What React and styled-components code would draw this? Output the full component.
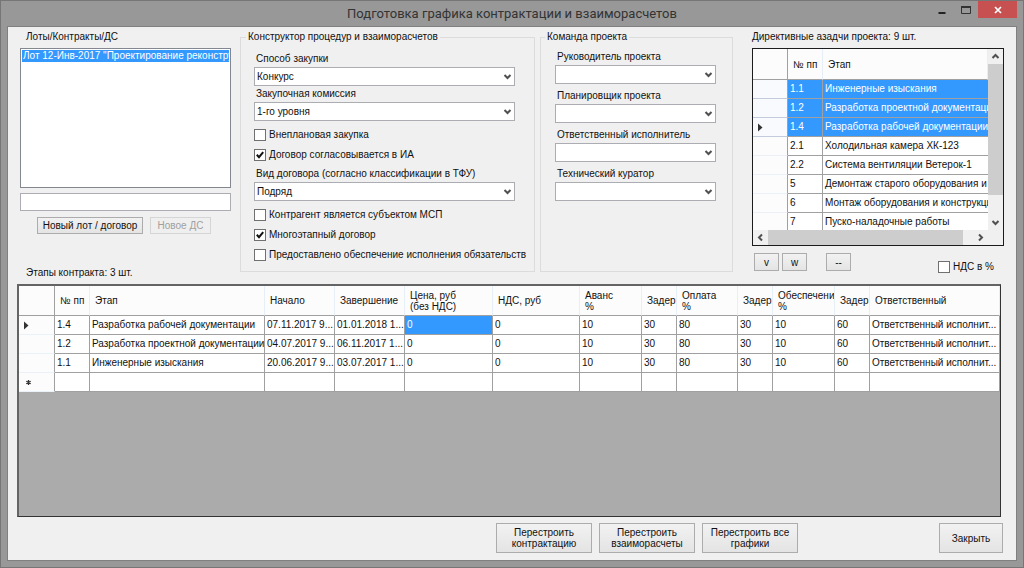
import React from 'react';
import styled, { createGlobalStyle } from 'styled-components';

const GlobalStyle = createGlobalStyle`
    *, *::before, *::after {
        box-sizing: border-box;
    }
    body {
        margin: 0;
        background: #989898;
    }
    body, button, input, select, table {
        font-family: 'Liberation Sans', Arial, sans-serif;
        font-size: 10px;
        line-height: 14px;
        color: #111;
    }
`;

const Window = styled.div`
    display: flex;
    flex-direction: column;
    min-height: 100vh;
    padding: 0 6px 6px;
    background: #989898;
    border: 1px solid #767676;
`;

const TitleBar = styled.header`
    display: grid;
    grid-template-columns: 1fr auto 1fr;
    height: 25px;
`;

const Title = styled.h1`
    grid-column: 2;
    margin: 0;
    font-family: Roboto, sans-serif;
    font-size: 13px;
    font-weight: 400;
    line-height: 26px;
    color: #333;
    white-space: nowrap;
`;

const WindowControls = styled.div`
    display: flex;
    justify-content: flex-end;
    align-items: flex-start;
`;

const WindowButton = styled.button`
    display: flex;
    align-items: center;
    justify-content: center;
    width: ${(props) => (props.$close ? '39px' : '24px')};
    height: 17px;
    padding: 0;
    border: 0;
    background: ${(props) => (props.$close ? '#c75050' : 'transparent')};
`;

const Form = styled.main`
    display: flex;
    flex: 1;
    flex-direction: column;
    padding: 3px 15px 7px 9px;
    background: #f0f0f0;
    border: 1px solid #808080;
`;

const TopArea = styled.div`
    display: grid;
    grid-template-columns: minmax(0, 223fr) minmax(0, 300fr) minmax(0, 193fr) minmax(0, 268fr);
    align-items: start;
    min-height: 250px;
`;

const LotsPanel = styled.section`
    display: flex;
    flex-direction: column;
    align-self: stretch;
    margin: 0 9px 0 3px;
`;

const Caption = styled.div`
    padding-left: ${(props) => props.$indent || '0'};
    line-height: 14px;
    white-space: nowrap;
`;

const BottomCaption = styled(Caption)`
    margin-top: auto;
`;

const LotList = styled.ul`
    height: 140px;
    margin: 4px 0 5px;
    padding: 1px;
    list-style: none;
    background: #fff;
    border: 1px solid #828790;
`;

const LotItem = styled.li`
    height: 12px;
    padding-left: 1px;
    overflow: hidden;
    line-height: 12px;
    white-space: nowrap;
    color: #fff;
    background: #3399ff;
`;

const TextBox = styled.input`
    width: 100%;
    height: 18px;
    padding: 0 3px;
    background: #fff;
    border: 1px solid #abadb3;
`;

const ButtonRow = styled.div`
    display: flex;
    gap: 7px;
    margin-top: 6px;
    padding-left: 17px;
`;

const Button = styled.button`
    height: ${(props) => props.$height || '17px'};
    width: ${(props) => props.$width};
    padding: 0;
    line-height: 11px;
    white-space: pre-line;
    background: linear-gradient(#f2f2f2, #e4e4e4);
    border: 1px solid #acacac;

    &:disabled {
        color: #a0a0a0;
        background: #efefef;
        border-color: #d5d5d5;
    }
`;

const Group = styled.fieldset`
    min-width: 0;
    height: 242px;
    margin: 0;
    padding: ${(props) => props.$pad};
    border: 1px solid #dcdcdc;
`;

const ProcedureGroup = styled(Group)`
    margin-right: 5px;
`;

const Legend = styled.legend`
    margin-left: ${(props) => props.$shift};
    padding: 0 2px;
    line-height: 14px;
`;

const FieldLabel = styled.label`
    display: block;
    height: 16px;
    padding-left: 2px;
    line-height: 16px;
    white-space: nowrap;
`;

const SelectWrap = styled.div`
    display: grid;
    align-items: center;

    & > * {
        grid-area: 1 / 1;
    }

    & > svg {
        justify-self: end;
        margin-right: 3px;
        pointer-events: none;
    }
`;

const Select = styled.select`
    appearance: none;
    width: 100%;
    height: 19px;
    padding: 0 16px 0 2px;
    background: #fff;
    border: 1px solid #abadb3;
    border-radius: 0;
`;

const FieldStack = styled.div`
    display: flex;
    flex-direction: column;
    gap: 4px;
`;

const CheckList = styled.div`
    margin: 4px 0 1px;
`;

const CheckLabel = styled.label`
    display: flex;
    align-items: center;
    gap: 3px;
    height: 20px;
    white-space: nowrap;
`;

const CheckMark = styled.span`
    display: grid;
    width: 12px;
    height: 12px;

    & > * {
        grid-area: 1 / 1;
    }

    & > svg {
        pointer-events: none;
    }
`;

const CheckInput = styled.input`
    appearance: none;
    width: 12px;
    height: 12px;
    margin: 0;
    background: #fff;
    border: 1px solid #707070;
`;

const TasksPanel = styled.section`
    margin-left: 19px;
    margin-right: -3px;
`;

const TaskGrid = styled.div`
    display: grid;
    grid-template-columns: minmax(0, 1fr) 15px;
    grid-template-rows: 181px 15px;
    height: 198px;
    margin-top: 4px;
    background: #f0f0f0;
    border: 1px solid #1c1c1c;
`;

const TaskView = styled.div`
    overflow: hidden;
    background: #fff;
`;

const Scrollbar = styled.div`
    display: flex;
    flex-direction: ${(props) => (props.$vertical ? 'column' : 'row')};
`;

const ScrollButton = styled.button`
    display: flex;
    flex: none;
    align-items: center;
    justify-content: center;
    width: 15px;
    height: 15px;
    padding: 0;
    background: transparent;
    border: 0;
`;

const ScrollTrack = styled.div`
    display: flex;
    flex: 1;
    flex-direction: inherit;
`;

const ScrollThumb = styled.div`
    flex: 0 0 ${(props) => props.$size};
    background: #cdcdcd;
`;

const Table = styled.table`
    width: 100%;
    table-layout: fixed;
    border-collapse: separate;
    border-spacing: 0;
    background: #fff;
`;

const HeadCell = styled.th`
    height: ${(props) => props.$height || '30px'};
    padding: 0 0 0 5px;
    overflow: hidden;
    font-weight: 400;
    line-height: 11px;
    text-align: left;
    vertical-align: middle;
    white-space: pre;
    background: #fcfcfc;
    border-right: 1px solid #e6eef7;
    border-bottom: 1px solid #a0a0a0;

    &:first-child {
        border-right-color: #a0a0a0;
    }
`;

const RowHead = styled.th`
    height: 19px;
    padding: 0 0 0 5px;
    line-height: 12px;
    text-align: left;
    background: ${(props) => (props.$selected ? '#f8fafd' : '#fcfcfc')};
    border-right: 1px solid #a0a0a0;
    border-bottom: 1px solid ${(props) => (props.$selected ? '#c3cbdc' : '#eaf1f8')};

    & > svg {
        display: block;
    }
`;

const Cell = styled.td`
    height: 19px;
    padding: 0 0 0 2px;
    overflow: hidden;
    line-height: 18px;
    white-space: nowrap;
    color: ${(props) => (props.$selected ? '#fff' : '#111')};
    background: ${(props) => (props.$selected ? '#3399ff' : '#fff')};
    border-right: 1px solid #a0a0a0;
    border-bottom: 1px solid #a0a0a0;

    ${TaskView} &:last-child {
        border-right: 0;
    }
`;

const TaskTools = styled.div`
    display: flex;
    align-items: flex-start;
    justify-content: space-between;
    height: 24px;
    margin-top: 7px;
    padding: 0 10px 0 2px;

    & > label {
        align-self: flex-end;
    }
`;

const ToolButtons = styled.div`
    display: flex;
    gap: 3px;

    & > :last-child {
        margin-left: 16px;
    }
`;

const StageGrid = styled.section`
    flex: 1;
    margin-top: 4px;
    background: #ababab;
    border: solid #646464;
    border-width: 2px 1px 1px 2px;
    border-right-color: #333;
    border-bottom-color: #333;
    overflow: hidden;
`;

const Footer = styled.footer`
    display: flex;
    justify-content: flex-end;
    gap: 7px;
    margin: 6px -2px 0 0;

    & > :last-child {
        margin-left: 134px;
    }
`;

const CHEVRONS = {
    down: 'M1.5 3 L4.5 6 L7.5 3',
    up: 'M1.5 6 L4.5 3 L7.5 6',
    left: 'M6 1.5 L3 4.5 L6 7.5',
    right: 'M3 1.5 L6 4.5 L3 7.5',
};

const Chevron = ({ dir }) => (
    <svg width="9" height="9" viewBox="0 0 9 9" fill="none" stroke="#505050" strokeWidth="2">
        <path d={CHEVRONS[dir]} />
    </svg>
);

const RowArrow = () => (
    <svg width="5" height="9" viewBox="0 0 5 9">
        <path d="M0 0.5 L4.5 4.5 L0 8.5 Z" fill="#333" />
    </svg>
);

const NewRowMark = () => (
    <svg width="9" height="7" viewBox="0 0 9 7" stroke="#333" strokeWidth="1.3">
        <path d="M4.5 1 V6 M2.3 2.3 L6.7 4.7 M6.7 2.3 L2.3 4.7" />
    </svg>
);

const SelectField = ({ id, label, value }) => (
    <div>
        <FieldLabel htmlFor={id}>{label}</FieldLabel>
        <SelectWrap>
            <Select id={id} defaultValue={value}>
                <option value={value}>{value}</option>
            </Select>
            <Chevron dir="down" />
        </SelectWrap>
    </div>
);

const CheckField = ({ label, initial = false }) => {
    const [checked, setChecked] = React.useState(initial);
    return (
        <CheckLabel>
            <CheckMark>
                <CheckInput type="checkbox" checked={checked} onChange={() => setChecked(!checked)} />
                {checked && (
                    <svg width="12" height="12" viewBox="0 0 12 12" fill="none" stroke="#111" strokeWidth="2">
                        <path d="M2.8 5.8 L5 8.2 L9.2 3.2" />
                    </svg>
                )}
            </CheckMark>
            {label}
        </CheckLabel>
    );
};

const tasks = [
    { num: '1.1', name: 'Инженерные изыскания', selected: true },
    { num: '1.2', name: 'Разработка проектной документаци', selected: true },
    { num: '1.4', name: 'Разработка рабочей документации', selected: true, current: true },
    { num: '2.1', name: 'Холодильная камера ХК-123' },
    { num: '2.2', name: 'Система вентиляции Ветерок-1' },
    { num: '5', name: 'Демонтаж старого оборудования и .' },
    { num: '6', name: 'Монтаж оборудования и конструкци' },
    { num: '7', name: 'Пуско-наладочные работы' },
];

const columns = [
    { title: '№ пп', width: 35 },
    { title: 'Этап', width: 175 },
    { title: 'Начало', width: 70 },
    { title: 'Завершение', width: 70 },
    { title: 'Цена, руб\n(без НДС)', width: 88 },
    { title: 'НДС, руб', width: 87 },
    { title: 'Аванс\n%', width: 62 },
    { title: 'Задер', width: 35 },
    { title: 'Оплата\n%', width: 61 },
    { title: 'Задер', width: 35 },
    { title: 'Обеспечени\n%', width: 62 },
    { title: 'Задер', width: 35 },
    { title: 'Ответственный' },
];

const stages = [
    ['1.4', 'Разработка рабочей документации', '07.11.2017 9...', '01.01.2018 1...', '0', '0', '10', '30', '80', '30', '10', '60', 'Ответственный исполнит...'],
    ['1.2', 'Разработка проектной документации', '04.07.2017 9...', '06.11.2017 1...', '0', '0', '10', '30', '80', '30', '10', '60', 'Ответственный исполнит...'],
    ['1.1', 'Инженерные изыскания', '20.06.2017 9...', '03.07.2017 1...', '0', '0', '10', '30', '80', '30', '10', '60', 'Ответственный исполнит...'],
];

const TaskTable = () => (
    <Table>
        <colgroup>
            <col width="35" />
            <col width="35" />
            <col />
        </colgroup>
        <thead>
            <tr>
                <HeadCell $height="31px" />
                <HeadCell $height="31px">№ пп</HeadCell>
                <HeadCell $height="31px">Этап</HeadCell>
            </tr>
        </thead>
        <tbody>
            {tasks.map((task) => (
                <tr key={task.num}>
                    <RowHead $selected={task.selected}>{task.current && <RowArrow />}</RowHead>
                    <Cell $selected={task.selected}>{task.num}</Cell>
                    <Cell $selected={task.selected}>{task.name}</Cell>
                </tr>
            ))}
        </tbody>
    </Table>
);

const StageTable = () => (
    <Table>
        <colgroup>
            <col width="36" />
            {columns.map((column, i) => (
                <col key={i} width={column.width} />
            ))}
        </colgroup>
        <thead>
            <tr>
                <HeadCell />
                {columns.map((column, i) => (
                    <HeadCell key={i}>{column.title}</HeadCell>
                ))}
            </tr>
        </thead>
        <tbody>
            {stages.map((stage, row) => (
                <tr key={stage[0]}>
                    <RowHead>{row === 0 && <RowArrow />}</RowHead>
                    {stage.map((value, i) => (
                        <Cell key={i} $selected={row === 0 && i === 4}>{value}</Cell>
                    ))}
                </tr>
            ))}
            <tr>
                <RowHead><NewRowMark /></RowHead>
                {columns.map((column, i) => (
                    <Cell key={i} />
                ))}
            </tr>
        </tbody>
    </Table>
);

const App = () => {
    return (
        <Window>
            <GlobalStyle />
            <TitleBar>
                <Title>Подготовка графика контрактации и взаиморасчетов</Title>
                <WindowControls>
                    <WindowButton aria-label="Свернуть">
                        <svg width="8" height="10" viewBox="0 0 8 10">
                            <path d="M0.5 8 H7.5" stroke="#222" strokeWidth="2" />
                        </svg>
                    </WindowButton>
                    <WindowButton aria-label="Развернуть">
                        <svg width="10" height="8" viewBox="0 0 10 8" fill="none" stroke="#333">
                            <path d="M0.5 1 V7.5 H9.5 V1" />
                            <path d="M0 1 H10" strokeWidth="2" />
                        </svg>
                    </WindowButton>
                    <WindowButton $close aria-label="Закрыть окно">
                        <svg width="8" height="8" viewBox="0 0 8 8" stroke="#fff" strokeWidth="1.7">
                            <path d="M1 1 L7 7 M7 1 L1 7" />
                        </svg>
                    </WindowButton>
                </WindowControls>
            </TitleBar>
            <Form>
                <TopArea>
                    <LotsPanel>
                        <Caption $indent="6px">Лоты/Контракты/ДС</Caption>
                        <LotList role="listbox" aria-label="Лоты/Контракты/ДС">
                            <LotItem role="option" aria-selected="true">Лот 12-Инв-2017 "Проектирование реконструк</LotItem>
                        </LotList>
                        <TextBox aria-label="Название лота" />
                        <ButtonRow>
                            <Button $width="106px">Новый лот / договор</Button>
                            <Button $width="61px" disabled>Новое ДС</Button>
                        </ButtonRow>
                        <BottomCaption $indent="6px">Этапы контракта: 3 шт.</BottomCaption>
                    </LotsPanel>
                    <ProcedureGroup $pad="7px 19px 0 13px">
                        <Legend $shift="-8px">Конструктор процедур и взаиморасчетов</Legend>
                        <SelectField id="method" label="Способ закупки" value="Конкурс" />
                        <SelectField id="commission" label="Закупочная комиссия" value="1-го уровня" />
                        <CheckList>
                            <CheckField label="Внеплановая закупка" />
                            <CheckField label="Договор согласовывается в ИА" initial />
                        </CheckList>
                        <SelectField id="kind" label="Вид договора (согласно классификации в ТФУ)" value="Подряд" />
                        <CheckList>
                            <CheckField label="Контрагент является субъектом МСП" />
                            <CheckField label="Многоэтапный договор" initial />
                            <CheckField label="Предоставлено обеспечение исполнения обязательств" />
                        </CheckList>
                    </ProcedureGroup>
                    <Group $pad="5px 16px 0 14px">
                        <Legend $shift="-10px">Команда проекта</Legend>
                        <FieldStack>
                            <SelectField id="manager" label="Руководитель проекта" value="" />
                            <SelectField id="planner" label="Планировщик проекта" value="" />
                            <SelectField id="executor" label="Ответственный исполнитель" value="" />
                            <SelectField id="curator" label="Технический куратор" value="" />
                        </FieldStack>
                    </Group>
                    <TasksPanel>
                        <Caption>Директивные азадчи проекта: 9 шт.</Caption>
                        <TaskGrid>
                            <TaskView>
                                <TaskTable />
                            </TaskView>
                            <Scrollbar $vertical>
                                <ScrollButton aria-label="Вверх"><Chevron dir="up" /></ScrollButton>
                                <ScrollTrack><ScrollThumb $size="87%" /></ScrollTrack>
                                <ScrollButton aria-label="Вниз"><Chevron dir="down" /></ScrollButton>
                            </Scrollbar>
                            <Scrollbar>
                                <ScrollButton aria-label="Влево"><Chevron dir="left" /></ScrollButton>
                                <ScrollTrack><ScrollThumb $size="95%" /></ScrollTrack>
                                <ScrollButton aria-label="Вправо"><Chevron dir="right" /></ScrollButton>
                            </Scrollbar>
                        </TaskGrid>
                        <TaskTools>
                            <ToolButtons>
                                <Button $width="25px" $height="18px">v</Button>
                                <Button $width="25px" $height="18px">w</Button>
                                <Button $width="25px" $height="18px">--</Button>
                            </ToolButtons>
                            <CheckField label="НДС в %" />
                        </TaskTools>
                    </TasksPanel>
                </TopArea>
                <StageGrid>
                    <StageTable />
                </StageGrid>
                <Footer>
                    <Button $width="96px" $height="30px">{'Перестроить\nконтрактацию'}</Button>
                    <Button $width="96px" $height="30px">{'Перестроить\nвзаиморасчеты'}</Button>
                    <Button $width="96px" $height="30px">{'Перестроить все\nграфики'}</Button>
                    <Button $width="64px" $height="30px">Закрыть</Button>
                </Footer>
            </Form>
        </Window>
    );
};

export default App;
